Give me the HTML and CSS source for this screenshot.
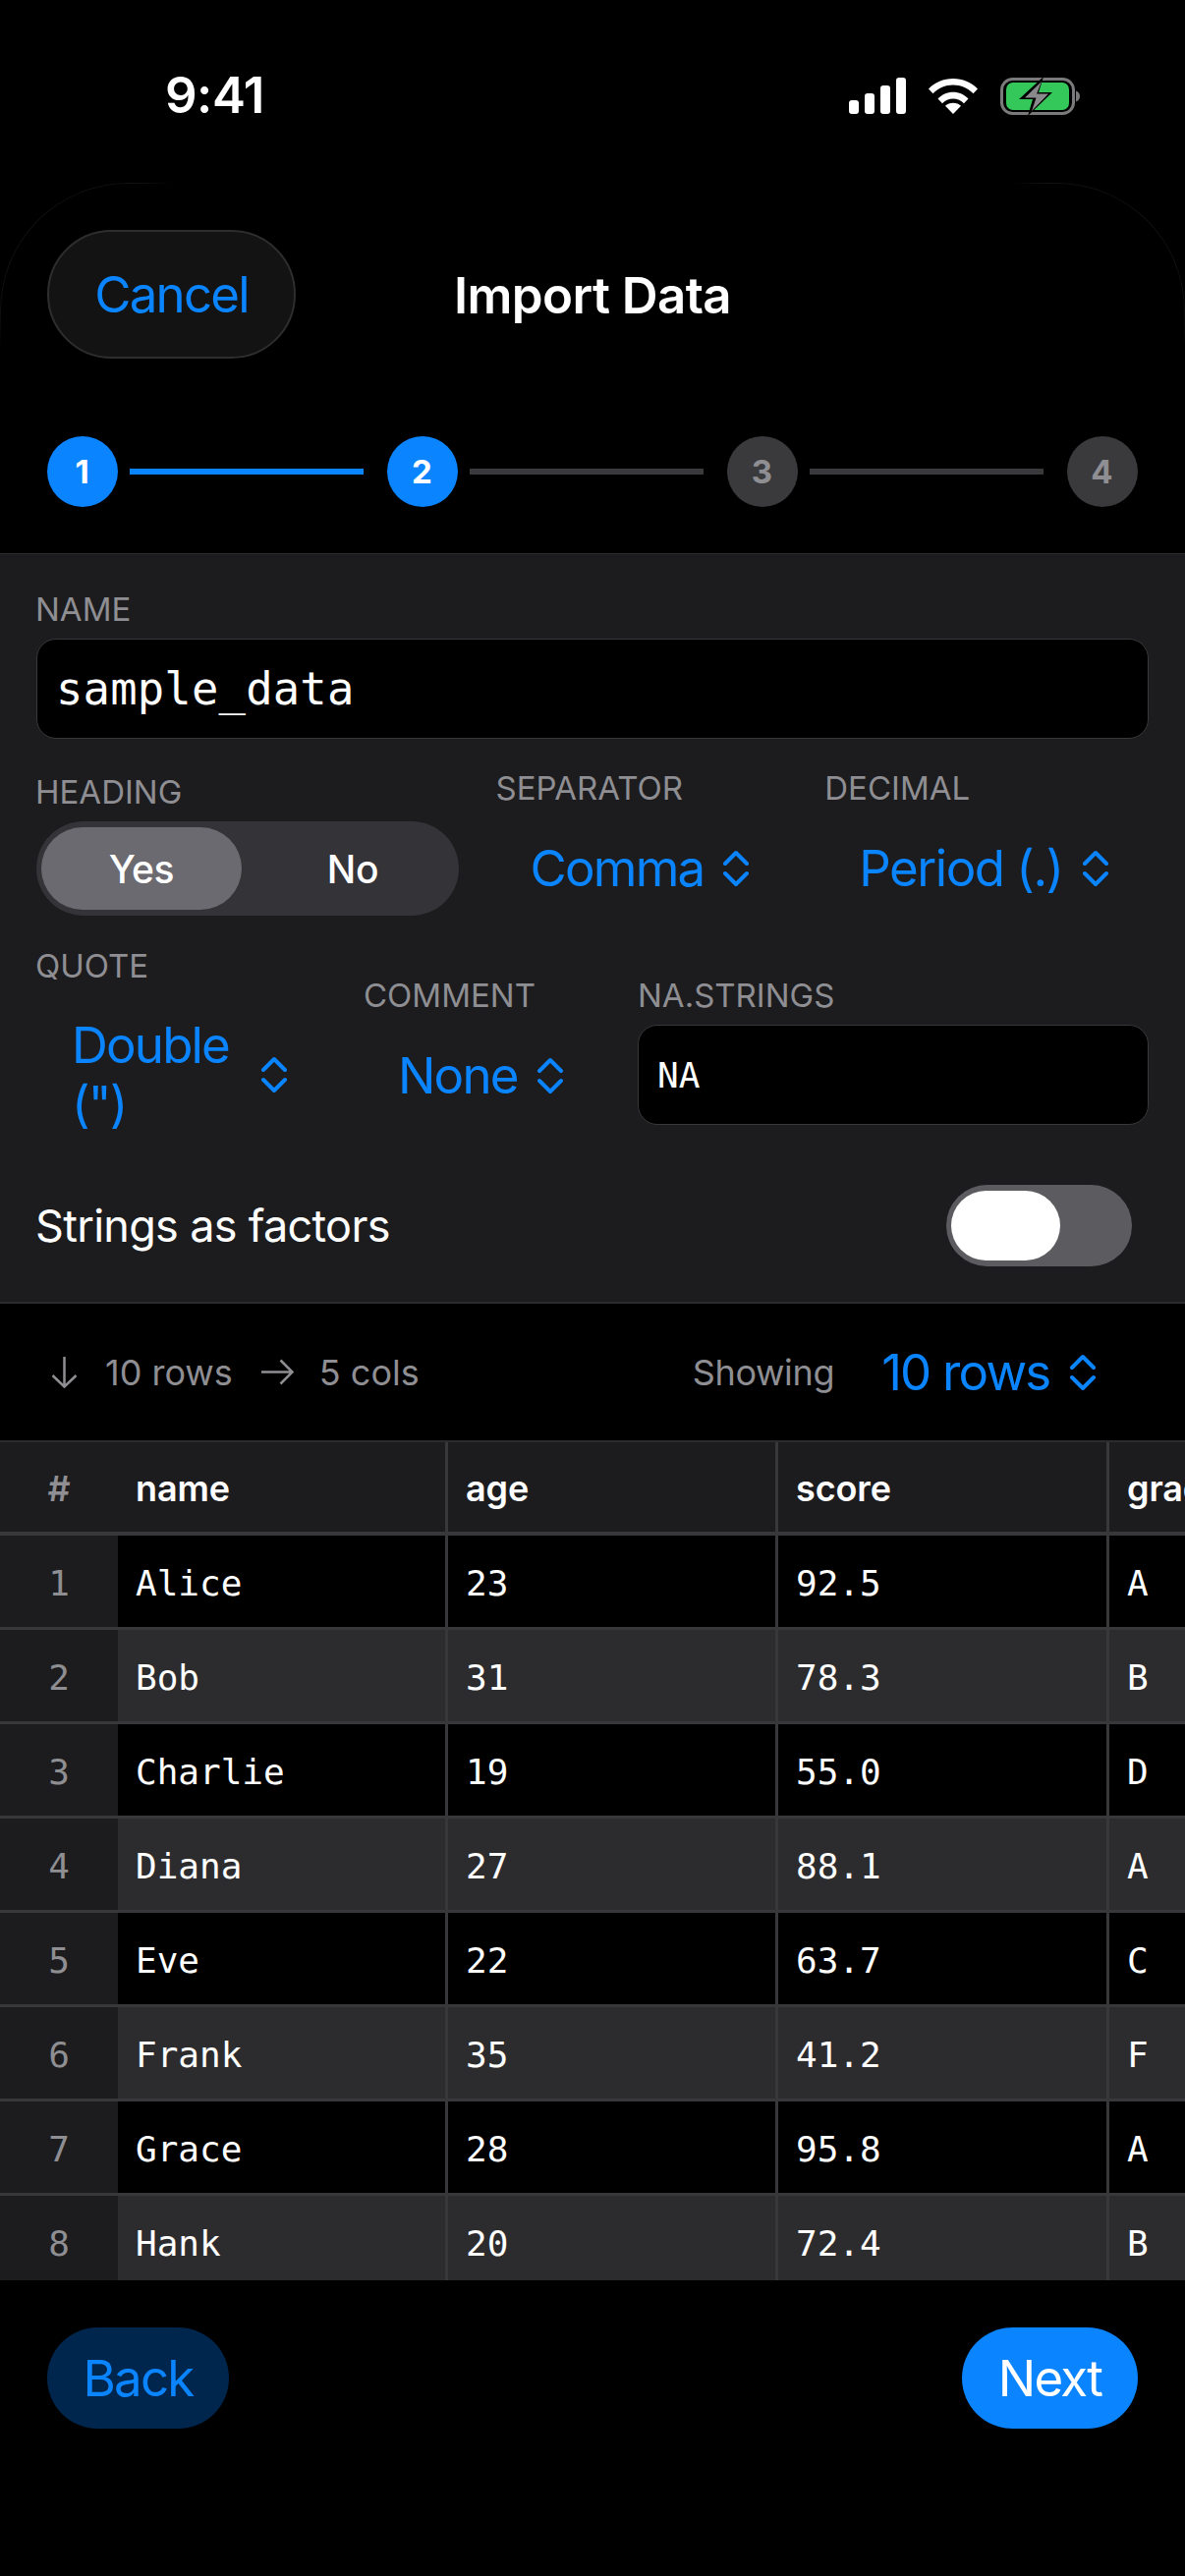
FILE: index.html
```html
<!DOCTYPE html>
<html lang="en">
<head>
<meta charset="utf-8">
<title>Import Data</title>
<link rel="stylesheet" href="styles.css">
</head>
<body>
<div class="screen">
  <div class="sheet-edge"></div>
  <header class="status">
    <span class="time">9:41</span>
    <div class="status-icons">
      <svg class="ic-signal" width="58" height="37" viewBox="0 0 58 37"><rect x="0" y="23" width="10" height="14" rx="3"/><rect x="16" y="16" width="10" height="21" rx="3"/><rect x="32" y="8" width="10" height="29" rx="3"/><rect x="48" y="0" width="10" height="37" rx="3"/></svg>
      <svg class="ic-wifi" width="50" height="37" viewBox="0 0 50 37"><path d="M0 11.500C6.500 4.800 15.200 1 25 1s18.500 3.800 25 10.500l-4.500 4.700C40 10.500 33 7.400 25 7.400S10 10.500 4.500 16.200Z"/><path d="M9.500 21.500C13.500 17.300 19 14.800 25 14.800s11.500 2.500 15.500 6.700L36 26.200C33.200 23.300 29.300 21.500 25 21.500s-8.200 1.800-11 4.700Z"/><path d="M25 37 17 28.800C19 26.900 21.900 25.800 25 25.800s6 1.100 8 3Z"/></svg>
      <svg class="ic-battery" width="81" height="40" viewBox="0 0 81 40"><rect x="1.500" y="2.500" width="73" height="35" rx="11" fill="none" stroke="#7a7a7c" stroke-width="3"/><rect x="6" y="6" width="64" height="28" rx="7" fill="#34c759"/><path d="M77 14.500c2.400.8 4 2.800 4 5.500s-1.600 4.700-4 5.500Z" fill="#7a7a7c"/><path d="M44 0 19 23h14l-5 17 25-24H39Z" fill="#000"/><path d="M42 5 25 21.500h11.500L32 35l17-17.500H37Z" fill="#8a8a8c"/></svg>
    </div>
  </header>

  <nav class="topbar">
    <button class="cancel">Cancel</button>
    <h1 class="title">Import Data</h1>
  </nav>

  <div class="stepper">
    <span class="step on">1</span><span class="bar on"></span>
    <span class="step on">2</span><span class="bar"></span>
    <span class="step">3</span><span class="bar"></span>
    <span class="step">4</span>
  </div>

  <section class="panel">
    <label class="lbl">NAME</label>
    <div class="input name-input">sample_data</div>

    <div class="row-a">
      <div class="f-heading">
        <label class="lbl">HEADING</label>
        <div class="seg"><span class="seg-item active">Yes</span><span class="seg-item">No</span></div>
      </div>
      <div class="f-sep">
        <label class="lbl">SEPARATOR</label>
        <div class="picker">Comma<svg class="chev" viewBox="0 0 26 38"><path d="M2 14 13 3l11 11M2 24l11 11 11-11"/></svg></div>
      </div>
      <div class="f-dec">
        <label class="lbl">DECIMAL</label>
        <div class="picker period">Period (.)<svg class="chev" viewBox="0 0 26 38"><path d="M2 14 13 3l11 11M2 24l11 11 11-11"/></svg></div>
      </div>
    </div>

    <div class="row-b">
      <div class="f-quote">
        <label class="lbl">QUOTE</label>
        <div class="picker wrap"><span class="wrap-text">Double (")</span><svg class="chev" viewBox="0 0 26 38"><path d="M2 14 13 3l11 11M2 24l11 11 11-11"/></svg></div>
      </div>
      <div class="f-comment">
        <label class="lbl">COMMENT</label>
        <div class="picker">None<svg class="chev" viewBox="0 0 26 38"><path d="M2 14 13 3l11 11M2 24l11 11 11-11"/></svg></div>
      </div>
      <div class="f-na">
        <label class="lbl">NA.STRINGS</label>
        <div class="input na-input">NA</div>
      </div>
    </div>

    <div class="toggle-row">
      <span class="toggle-label">Strings as factors</span>
      <span class="toggle"><span class="knob"></span></span>
    </div>
  </section>

  <div class="summary">
    <svg class="arrow down" width="27" height="33" viewBox="0 0 27 33"><path d="M13.500 1v30.500M1.500 20l12 11.500 12-11.500"/></svg>
    <span class="meta m-rows">10 rows</span>
    <svg class="arrow right" width="33" height="27" viewBox="0 0 33 27"><path d="M0 13.500h31M19.500 1.500l12 12-12 12"/></svg>
    <span class="meta m-cols">5 cols</span>
    <span class="meta m-show">Showing</span>
    <div class="picker m-pick">10 rows<svg class="chev" viewBox="0 0 26 38"><path d="M2 14 13 3l11 11M2 24l11 11 11-11"/></svg></div>
  </div>

  <div class="table">
    <div class="tr head"><div class="td idx">#</div><div class="td">name</div><div class="td">age</div><div class="td">score</div><div class="td">grade</div></div>
    <div class="tr"><div class="td idx">1</div><div class="td">Alice</div><div class="td">23</div><div class="td">92.5</div><div class="td">A</div></div>
    <div class="tr alt"><div class="td idx">2</div><div class="td">Bob</div><div class="td">31</div><div class="td">78.3</div><div class="td">B</div></div>
    <div class="tr"><div class="td idx">3</div><div class="td">Charlie</div><div class="td">19</div><div class="td">55.0</div><div class="td">D</div></div>
    <div class="tr alt"><div class="td idx">4</div><div class="td">Diana</div><div class="td">27</div><div class="td">88.1</div><div class="td">A</div></div>
    <div class="tr"><div class="td idx">5</div><div class="td">Eve</div><div class="td">22</div><div class="td">63.7</div><div class="td">C</div></div>
    <div class="tr alt"><div class="td idx">6</div><div class="td">Frank</div><div class="td">35</div><div class="td">41.2</div><div class="td">F</div></div>
    <div class="tr"><div class="td idx">7</div><div class="td">Grace</div><div class="td">28</div><div class="td">95.8</div><div class="td">A</div></div>
    <div class="tr alt last"><div class="td idx">8</div><div class="td">Hank</div><div class="td">20</div><div class="td">72.4</div><div class="td">B</div></div>
  </div>

  <footer class="footer">
    <button class="back">Back</button>
    <button class="next">Next</button>
  </footer>
</div>
</body>
</html>
```

FILE: styles.css
```css
* { box-sizing: border-box; margin: 0; padding: 0; }
html, body { background: #000; }
body { font-family: Inter, "Noto Sans", sans-serif; color: #fff; }
button { font: inherit; border: 0; letter-spacing: -1.8px; }
.screen { position: relative; width: 1206px; height: 2622px; overflow: hidden; background: #000; }
.sheet-edge { position: absolute; left: 0; right: 0; top: 186px; height: 170px; border: 1px solid #121212; border-bottom: 0; border-radius: 130px 130px 0 0; -webkit-mask-image: linear-gradient(90deg, #000 140px, transparent 175px, transparent 1031px, #000 1066px), linear-gradient(#000 70%, transparent); -webkit-mask-composite: source-in; mask-composite: intersect; }

.status { height: 186px; padding: 0 0 0 168px; display: flex; justify-content: space-between; position: relative; }
.time { font-size: 51px; font-weight: 600; line-height: 62px; margin-top: 66px; letter-spacing: -.5px; }
.status-icons { display: flex; gap: 23px; align-items: flex-start; padding: 79px 107px 0 0; }
.status-icons svg { fill: #fff; display: block; }
.status-icons .ic-battery { margin: -1px 0 0 0; }

.topbar { height: 178px; padding: 48px 48px 0; position: relative; }
.cancel { width: 253px; height: 131px; border-radius: 66px; background: #131313; border: 2px solid #2e2e2e; color: #0a84ff; font-size: 51px; }
.title { position: absolute; left: 0; right: 0; top: 84px; text-align: center; font-size: 51px; line-height: 62px; font-weight: 600; letter-spacing: -.6px; }

.stepper { display: flex; align-items: center; gap: 12px; padding: 0 48px; height: 72px; margin-top: 80px; }
.step { width: 72px; height: 72px; border-radius: 50%; background: #3a3a3c; color: #8e8e93; font-size: 33px; font-weight: 700; display: flex; align-items: center; justify-content: center; flex: none; padding-right: 1px; }
.step.on { background: #0a84ff; color: #fff; }
.bar { width: 238px; height: 6px; background: #3a3a3c; margin-right: 12px; }
.bar.on { background: #0a84ff; }

.panel { margin-top: 47px; height: 764px; background: #1c1c1e; border-top: 1px solid #2c2c2e; border-bottom: 2px solid #2c2c2e; padding: 0 37px; }
.lbl { display: block; font-size: 33px; line-height: 40px; color: #8e8e93; }
.panel > .lbl, .f-heading .lbl, .f-quote .lbl { margin-left: -1px; }
.panel > .lbl { margin-top: 36px; }
.input { background: #000; border: 1px solid #38383a; border-radius: 20px; font-family: "DejaVu Sans Mono", monospace; display: flex; align-items: center; }
.name-input { height: 102px; margin-top: 10px; font-size: 45.5px; padding-left: 19px; letter-spacing: .2px; }
.na-input { height: 102px; margin-top: 10px; font-size: 36px; padding-left: 19px; }

.row-a { display: flex; margin-top: 30px; height: 181px; }
.f-heading { width: 468px; padding-top: 4px; }
.seg { margin-top: 10px; width: 430px; height: 96px; border-radius: 48px; background: #333338; padding: 6px 5px; display: flex; }
.seg-item { flex: 1; display: flex; align-items: center; justify-content: center; font-size: 39px; font-weight: 500; border-radius: 42px; letter-spacing: -.4px; padding-left: 10px; }
.seg-item.active { background: #6b6a70; flex: none; width: 204px; padding-left: 0; }
.f-sep { width: 335px; }
.f-dec { width: 330px; }
.picker { display: flex; align-items: center; color: #0a84ff; font-size: 51px; line-height: 60px; letter-spacing: -1.8px; gap: 20px; }
.f-sep .picker, .f-dec .picker { margin-top: 32px; margin-left: 35px; }
.f-dec .period { letter-spacing: -1.5px; }
.chev { width: 26px; height: 38px; fill: none; stroke: #0a84ff; stroke-width: 4; stroke-linecap: round; stroke-linejoin: round; flex: none; }

.row-b { display: flex; height: 196px; }
.f-quote { width: 333px; }
.f-quote .picker { margin: 31px 0 0 36px; gap: 28px; }
.wrap-text { width: 165px; white-space: normal; }
.f-comment { width: 279px; padding-top: 30px; }
.f-comment .picker { margin: 32px 0 0 35px; }
.f-na { width: 520px; padding-top: 30px; }

.toggle-row { display: flex; justify-content: space-between; align-items: center; padding-right: 17px; margin-top: 46px; height: 84px; }
.toggle-label { font-size: 45px; letter-spacing: -.7px; margin-left: -1px; }
.toggle { width: 189px; height: 83px; background: #5c5c60; border-radius: 42px; padding: 6px 5px; display: block; }
.knob { display: block; width: 111px; height: 71px; background: #fff; border-radius: 36px; }

.summary { height: 139px; display: flex; align-items: center; padding-left: 52px; position: relative; }
.meta { font-size: 36px; color: #8e8e93; }
.arrow { fill: none; stroke: #8e8e93; stroke-width: 2.5; flex: none; }
.m-rows { margin-left: 28px; }
.arrow.right { margin-left: 29px; }
.m-cols { margin-left: 26px; }
.m-show { margin-left: 278px; letter-spacing: -.35px; }
.m-pick { margin-left: 48px; gap: 21px; }

.table { height: 855px; overflow: hidden; border-top: 2px solid #2c2c2e; }
.tr { display: grid; grid-template-columns: 120px 336px 336px 337px 200px; height: 96px; border-bottom: 3px solid #38383a; background: #000; }
.tr.head { height: 95px; background: #1c1c1e; border-bottom-width: 4px; }
.tr.alt { background: #2c2c2e; }
.td { font-family: "DejaVu Sans Mono", monospace; font-size: 36px; padding: 3px 0 0 18px; display: flex; align-items: center; border-right: 3px solid #38383a; white-space: nowrap; }
.td.idx { background: #1c1c1e; color: #8e8e93; border-right: 0; justify-content: center; padding-left: 0; }
.head .td { font-family: Inter, sans-serif; font-weight: 600; font-size: 36px; padding-top: 2px; letter-spacing: -.1px; }
.head .td.idx { color: #8e8e93; }

.footer { display: flex; justify-content: space-between; padding: 48px 48px 0; }
.back, .next { height: 103px; font-size: 51px; border-radius: 52px; }
.back { width: 185px; background: #00264d; color: #0a84ff; }
.next { width: 179px; background: #0a84ff; color: #fff; }
```
